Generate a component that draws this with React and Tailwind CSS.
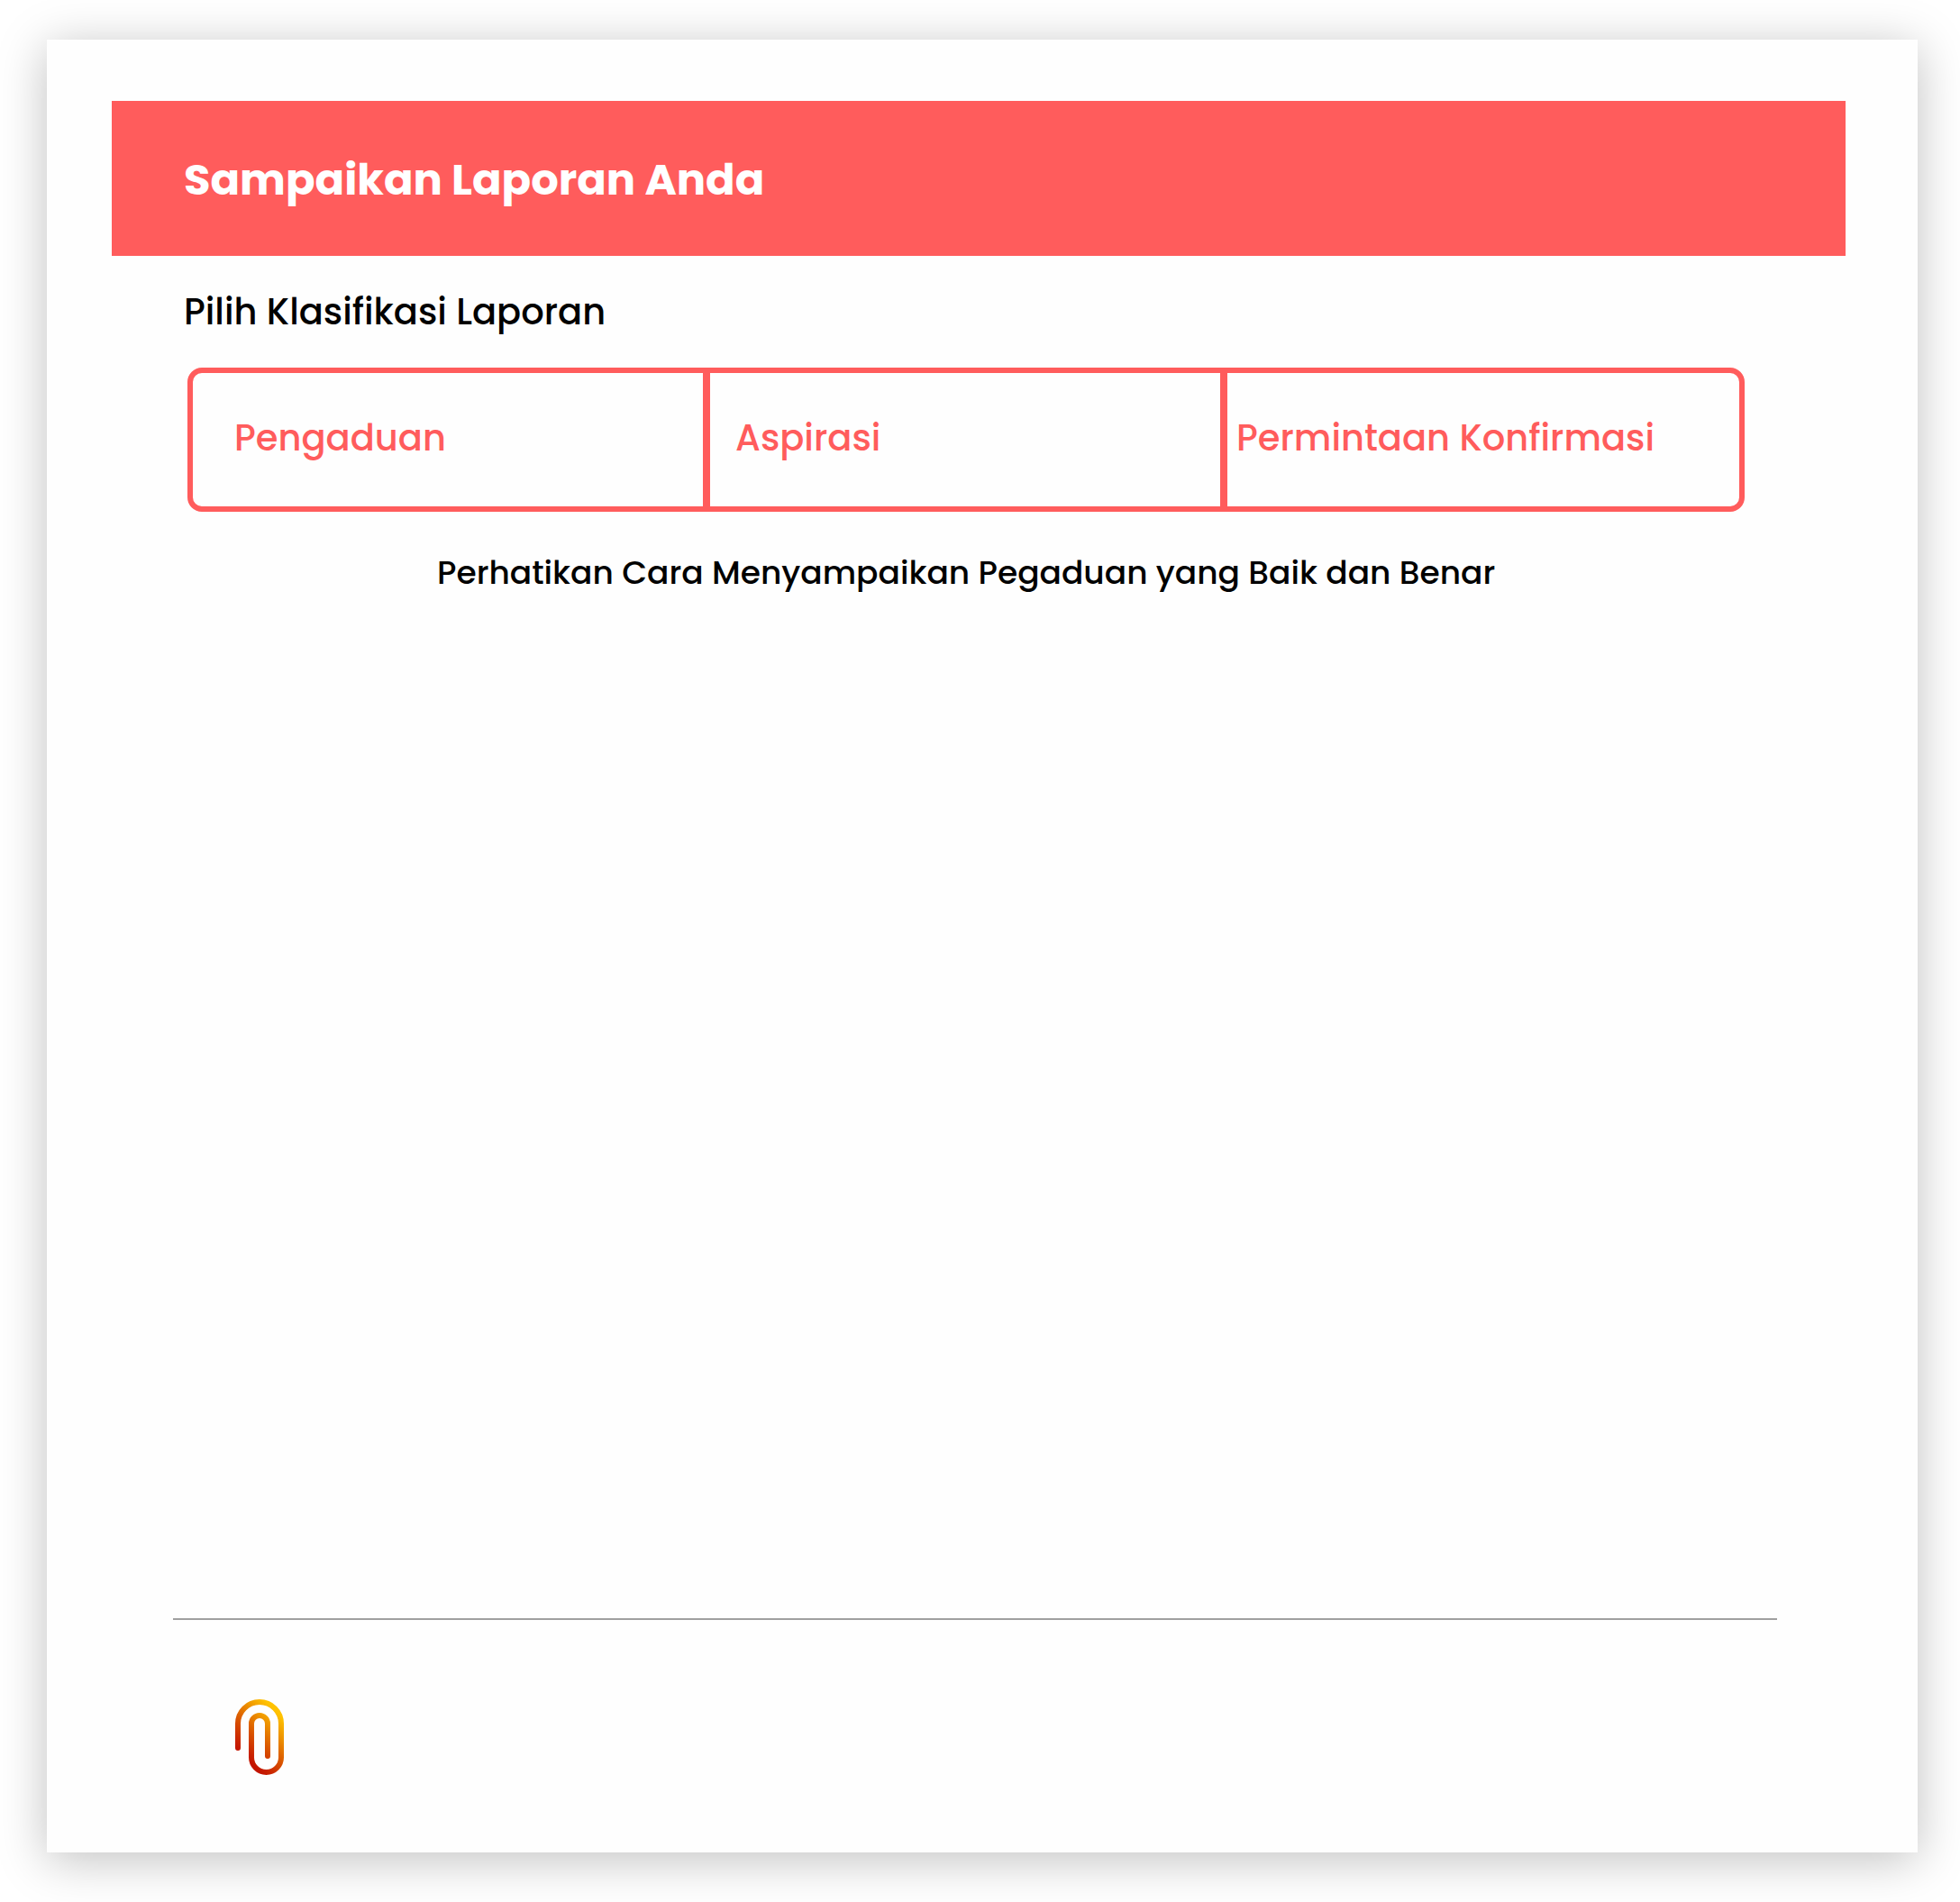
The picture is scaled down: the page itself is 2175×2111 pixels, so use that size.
const tabs = [
  { label: "Pengaduan", className: "w-[574px] border-r-8 pl-[46px]" },
  { label: "Aspirasi", className: "w-[574px] border-r-8 pl-[28px]" },
  { label: "Permintaan Konfirmasi", className: "flex-1 pl-[10px]" },
];

function PaperclipIcon() {
  return (
    <svg className="mt-[88px] ml-[69px] h-[84px] w-[54px]" viewBox="0 0 54 84" fill="none" role="img" aria-label="Lampiran">
      <defs>
        <linearGradient id="clip" gradientUnits="userSpaceOnUse" x1="47" y1="15" x2="4.5" y2="57.5">
          <stop stopColor="#FFC200" />
          <stop offset="0.27" stopColor="#EE9400" />
          <stop offset="0.6" stopColor="#D95400" />
          <stop offset="0.88" stopColor="#CA2400" />
          <stop offset="1" stopColor="#C31400" />
        </linearGradient>
      </defs>
      <path
        d="M3 54V27a24 24 0 0 1 48 0v37.500a16.500 16.500 0 0 1-33 0V27a9 9 0 0 1 18 0v36"
        stroke="url(#clip)"
        strokeWidth="6"
        strokeLinecap="round"
      />
    </svg>
  );
}

export default function App() {
  return (
    <div className="h-[2111px] w-[2175px] overflow-hidden bg-white pt-[44px] pl-[52px] font-['Poppins','Inter',sans-serif]">
      <main className="flex h-[2012px] w-[2076px] flex-col bg-[#fefefe] pt-[68px] shadow-[0_8px_50px_rgba(0,0,0,0.25)]">
        <header className="ml-[72px] flex h-[172px] w-[1924px] items-center bg-[#ff5c5c] pt-[4px] pl-[80px]">
          <h1 className="text-[48px] leading-[72px] font-bold whitespace-nowrap text-white">
            Sampaikan Laporan Anda
          </h1>
        </header>

        <h2 className="mt-[32px] ml-[152px] text-[40px] leading-[60px] font-medium whitespace-nowrap text-black">
          Pilih Klasifikasi Laporan
        </h2>

        <div className="mt-[32px] ml-[156px] flex h-[160px] w-[1728px] rounded-[16px] border-6 border-[#ff5c5c]">
          {tabs.map((tab) => (
            <button
              key={tab.label}
              className={`flex items-center border-[#ff5c5c] pb-[4px] text-left text-[40px] leading-[60px] font-medium whitespace-nowrap text-[#ff5c5c] ${tab.className}`}
            >
              {tab.label}
            </button>
          ))}
        </div>

        <p className="mt-[41px] ml-[433px] text-[36px] leading-[54px] font-medium whitespace-nowrap text-black">
          Perhatikan Cara Menyampaikan Pegaduan yang Baik dan Benar
        </p>

        <footer className="mt-auto ml-[140px] h-[260px] w-[1780px] border-t-2 border-[#a0a0a0]">
          <PaperclipIcon />
        </footer>
      </main>
    </div>
  );
}
